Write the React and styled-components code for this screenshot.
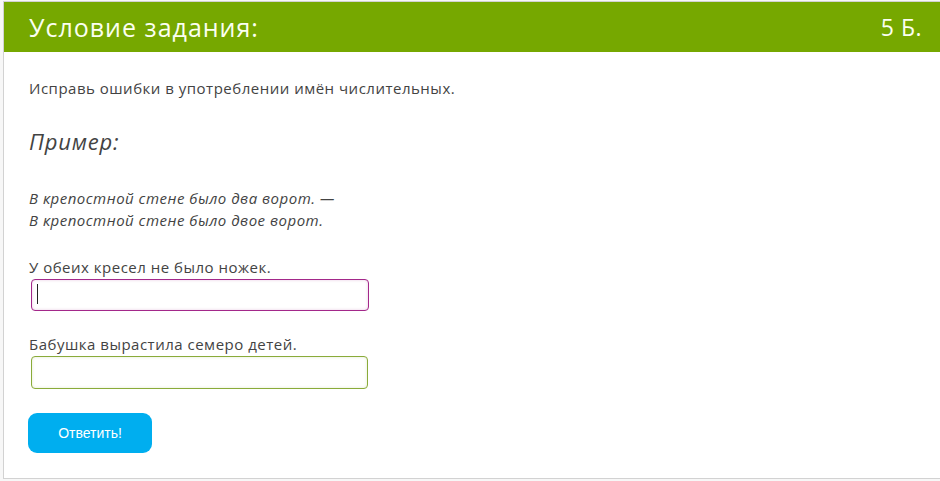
import React from "react";
import styled, { createGlobalStyle } from "styled-components";

const Global = createGlobalStyle`
  html, body { margin: 0; padding: 0; }
  body {
    background: #f7f7f7;
    font-family: "Open Sans", "DejaVu Sans", sans-serif;
    overflow: hidden;
  }
`;

const Page = styled.div`
  padding: 1px 0 0 3px;
  overflow: hidden;
`;

const Panel = styled.section`
  border: 1px solid #d2d2d2;
  border-right: none;
  margin-right: -4px;
  background: #ffffff;
`;

const Header = styled.header`
  height: 50px;
  background: #76a800;
  color: #fbfff0;
  display: flex;
  align-items: center;
  justify-content: space-between;
  padding: 0 22px 0 25px;
`;

const Title = styled.h2`
  margin: 0;
  font-weight: 400;
  font-size: 25px;
  letter-spacing: 1px;
  line-height: 30px;
`;

const Score = styled.span`
  font-size: 23px;
  letter-spacing: 0.5px;
  line-height: 30px;
`;

const Body = styled.div`
  padding: 25px 25px 25px 25px;
  color: #434343;
`;

const Text = styled.p`
  margin: 0;
  font-size: 15px;
  letter-spacing: 0.5px;
  line-height: 22px;
`;

const ExampleTitle = styled.h3`
  margin: 27px 0 0;
  font-size: 22px;
  letter-spacing: 0.8px;
  line-height: 30px;
  font-weight: 400;
  font-style: italic;
`;

const ExampleText = styled.p`
  margin: 31px 0 0;
  font-size: 15px;
  letter-spacing: 0.5px;
  line-height: 22px;
  font-style: italic;
`;

const Task = styled.div`
  margin-top: ${(p) => p.$gap}px;
  display: flex;
  flex-direction: column;
`;

const Field = styled.div`
  position: relative;
  margin: 1px 0 0 2px;
  width: ${(p) => p.$w}px;
`;

const Input = styled.input`
  box-sizing: border-box;
  width: 100%;
  height: ${(p) => p.$h}px;
  border: 1px solid ${(p) => (p.$focus ? "#a3288a" : "#8aab3a")};
  border-radius: 4px;
  background: #fff;
  box-shadow: inset 0 0 3px ${(p) => (p.$focus ? "rgba(163,40,138,0.25)" : "rgba(138,171,58,0.25)")};
  outline: none;
  padding: 0 6px;
  font-family: inherit;
  font-size: 15px;
  caret-color: transparent;
`;

const Caret = styled.span`
  position: absolute;
  left: 6px;
  top: 5px;
  width: 1px;
  height: 20px;
  background: #222;
`;

const Button = styled.button`
  display: block;
  margin: 24px 0 0 -1px;
  width: 124px;
  height: 40px;
  border: none;
  border-radius: 9px;
  background: #00aeef;
  color: #fff;
  font-family: "Liberation Sans", Arial, sans-serif;
  font-size: 14px;
  cursor: pointer;
`;

export default function App() {
  return (
    <>
      <Global />
      <Page>
        <Panel>
          <Header>
            <Title>Условие задания:</Title>
            <Score>5 Б.</Score>
          </Header>
          <Body>
            <Text>Исправь ошибки в употреблении имён числительных.</Text>
            <ExampleTitle>Пример:</ExampleTitle>
            <ExampleText>
              В крепостной стене было два ворот. —
              <br />
              В крепостной стене было двое ворот.
            </ExampleText>
            <Task $gap={25}>
              <Text>У обеих кресел не было ножек.</Text>
              <Field $w={338}>
                <Input $h={32} $focus />
                <Caret />
              </Field>
            </Task>
            <Task $gap={22}>
              <Text>Бабушка вырастила семеро детей.</Text>
              <Field $w={337}>
                <Input $h={33} />
              </Field>
            </Task>
            <Button>Ответить!</Button>
          </Body>
        </Panel>
      </Page>
    </>
  );
}
